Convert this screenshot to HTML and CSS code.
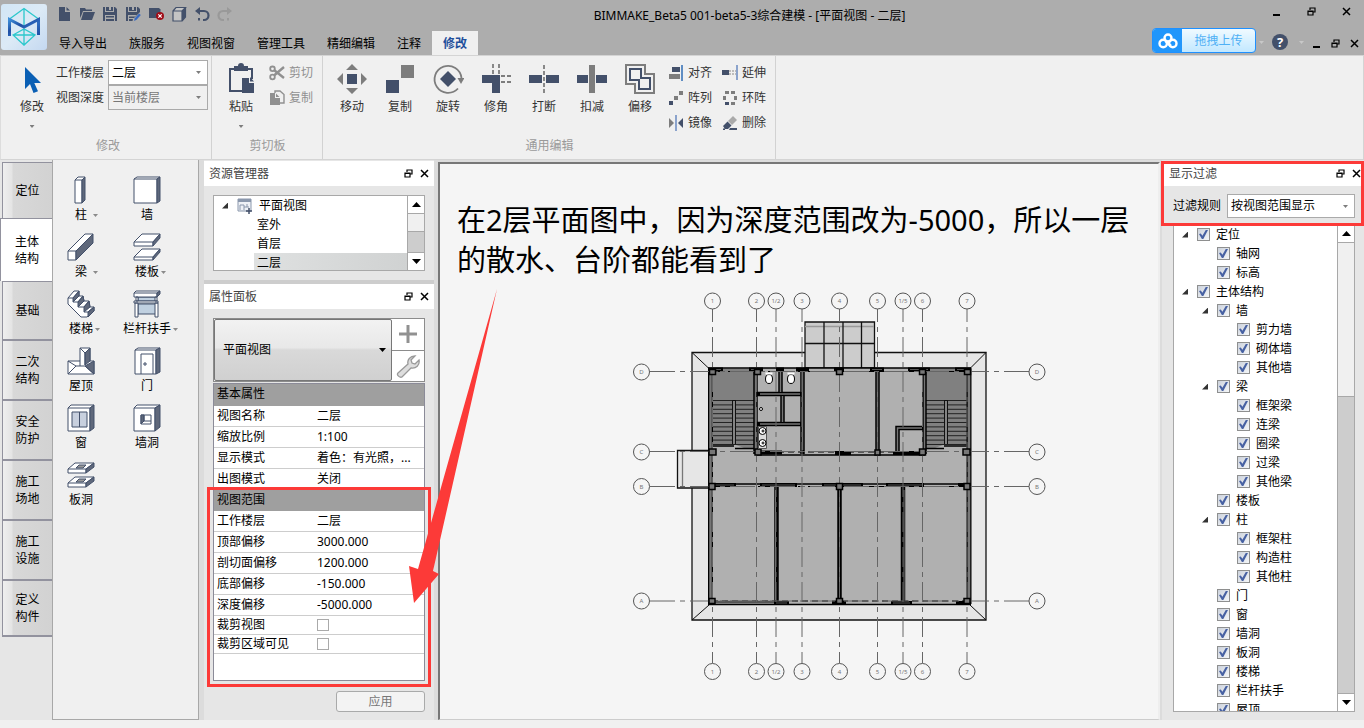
FILE: index.html
```html
<!DOCTYPE html>
<html lang="zh-CN">
<head>
<meta charset="utf-8">
<title>BIMMAKE_Beta5</title>
<link rel="stylesheet" href="styles.css">
</head>
<body>
<svg class="defs" aria-hidden="true">
  <symbol id="i-restore" viewBox="0 0 9 9"><path d="M3 3V1h5v4H6M2.500 1h6M1 4h5v4H1zM.5 4.500h6" fill="none" stroke="currentColor" stroke-width="1.200"/></symbol>
  <symbol id="i-close" viewBox="0 0 9 9"><path d="M1 1l7 7M8 1L1 8" fill="none" stroke="currentColor" stroke-width="1.500"/></symbol>
  <symbol id="i-min" viewBox="0 0 9 9"><path d="M1 7h7v2H1z" fill="currentColor"/></symbol>
  <symbol id="i-up" viewBox="0 0 9 5"><path d="M0 5L4.500 0 9 5z" fill="currentColor"/></symbol>
  <symbol id="i-down" viewBox="0 0 9 5"><path d="M0 0h9L4.500 5z" fill="currentColor"/></symbol>
</svg>

<header class="top">
  <svg class="logo" viewBox="0 0 46 46" aria-label="BIMMAKE">
    <defs><linearGradient id="lg" x1="0" y1="0" x2="1" y2="1"><stop offset="0" stop-color="#d2e6f6"/><stop offset=".5" stop-color="#dceaf6"/><stop offset="1" stop-color="#c4d8f0"/></linearGradient>
    <linearGradient id="lm" x1="0" y1="0" x2="1" y2="1"><stop offset="0" stop-color="#3f8fd8"/><stop offset=".35" stop-color="#1f4fa4"/><stop offset=".6" stop-color="#2f6cc0"/><stop offset="1" stop-color="#1d4ea2"/></linearGradient></defs>
    <rect width="46" height="46" rx="3" fill="url(#lg)"/>
    <path d="M8.500 15L23 4.500 37.500 15M23 4.500V22M12 31l11-6 11 6-11 10zM23 25v16M12 31h22" fill="none" stroke="#2cc8cc" stroke-width="1.300"/>
    <path d="M8.500 32V15.500L23 23l14.500-7.500V31" fill="none" stroke="url(#lm)" stroke-width="3"/>
  </svg>
  <div class="top-rows">
    <div class="title-row">
      <div class="quick">
        <button aria-label="新建"><svg viewBox="0 0 16 16"><path d="M3 1h6v5h5v9H3zM10.500 1L14 4.500h-3.500z" fill="#43506a"/></svg></button>
        <button aria-label="打开"><svg viewBox="0 0 16 16"><path d="M1 2h5l1 1.500h6V5H4L2.500 9 1 12zM4.500 6H16l-3 8H2z" fill="#43506a"/></svg></button>
        <button aria-label="保存"><svg viewBox="0 0 16 16"><path d="M1 1h2v5h9V1h1l2 2v12h-2V9H3v6H1zM4 1h3v3h2V1h2v4H4zM4 10h8v1.500H4zM4 13h8v2H4z" fill="#43506a"/></svg></button>
        <button aria-label="另存为"><svg viewBox="0 0 16 16"><path d="M1 1h2v5h9V1h1l2 2v3L9 12H4v-1.500h6L11.500 9H3v6H1zM4 1h3v3h2V1h2v4H4zM4 13h4l-.5 2H4z" fill="#43506a"/><path d="M9 15l.8-2.800L14 7.500l1.800 1.600-4.200 4.700z" fill="#3769c0"/></svg></button>
        <button aria-label="关闭文件"><svg viewBox="0 0 16 16"><path d="M1 2h10l1.500 1.500V12H1z" fill="#43506a"/><circle cx="12" cy="10" r="4" fill="#a00d18"/><path d="M10.300 8.300l3.400 3.400m0-3.400l-3.400 3.400" stroke="#fff" stroke-width="1.200"/></svg></button>
        <button aria-label="三维视图"><svg viewBox="0 0 16 16"><path d="M2 5h9v10H2zM2 5l3-3.500h9.500L11 5M14.500 1.500V11L11 15" fill="#c4c4c4" stroke="#43506a" stroke-width="1.200"/><path d="M11 5l3.500-3.500V11L11 15z" fill="#43506a"/></svg></button>
        <button aria-label="撤销"><svg viewBox="0 0 16 16"><path d="M5 5h5a4 4 0 010 9H9" fill="none" stroke="#43506a" stroke-width="2.200"/><path d="M1 5l5-4v8z" fill="#43506a"/><path d="M4 12h2v2.500H4z" fill="#43506a"/></svg></button>
        <button aria-label="重做"><svg viewBox="0 0 16 16"><path d="M11 5H6a4 4 0 000 9h1" fill="none" stroke="#999" stroke-width="2.200"/><path d="M15 5l-5-4v8z" fill="#999"/><path d="M10 12h2v2.500h-2z" fill="#999"/></svg></button>
      </div>
      <h1 class="title">BIMMAKE_Beta5 001-beta5-3综合建模 - [平面视图 - 二层]</h1>
      <div class="win">
        <button aria-label="最小化"><svg><use href="#i-min"/></svg></button>
        <button aria-label="还原"><svg><use href="#i-restore"/></svg></button>
        <button aria-label="关闭"><svg><use href="#i-close"/></svg></button>
      </div>
    </div>
    <div class="tab-row">
      <nav class="tabs">
        <button>导入导出</button><button>族服务</button><button>视图视窗</button><button>管理工具</button><button>精细编辑</button><button>注释</button><button class="on">修改</button>
      </nav>
      <button class="upload"><span class="cloud"><svg viewBox="0 0 20 16"><g fill="none" stroke="#fff" stroke-width="2.400"><circle cx="5.200" cy="10.500" r="3.700"/><circle cx="14.800" cy="10.500" r="3.700"/><circle cx="10" cy="5" r="3.500"/><path d="M7.500 8l5.500 5"/></g></svg></span><span class="uptext">拖拽上传</span></button>
      <i class="caret pale"></i>
      <button class="help" aria-label="帮助">?</button>
      <i class="caret pale"></i>
      <div class="win small">
        <button aria-label="最小化视图"><svg><use href="#i-min"/></svg></button>
        <button aria-label="还原视图"><svg><use href="#i-restore"/></svg></button>
        <button aria-label="关闭视图"><svg><use href="#i-close"/></svg></button>
      </div>
    </div>
  </div>
</header>

<section class="ribbon">
  <div class="group g-mod">
    <div class="tools">
      <button class="big"><svg viewBox="0 0 32 32"><path d="M9 4v22l5-5 3.500 9 4.500-1.800L18.300 20H25z" fill="#0a5fb4"/></svg>修改<i class="caret"></i></button>
      <div class="fields">
        <label for="level">工作楼层</label><span class="sel"><select id="level"><option>二层</option></select></span>
        <label for="depth">视图深度</label><span class="sel off"><select id="depth" disabled><option>当前楼层</option></select></span>
      </div>
    </div>
    <div class="cap">修改</div>
  </div>
  <div class="group g-clip">
    <div class="tools">
      <button class="big"><svg viewBox="0 0 32 32"><path d="M5 6h22v10" fill="none" stroke="#43506a" stroke-width="2"/><path d="M5 5v23h12" fill="none" stroke="#43506a" stroke-width="2"/><path d="M9 3h4a3 3 0 016 0h4v5H9z" fill="#43506a"/><path d="M17 15h7v5h5v10H17zM25 14l4 4.500h-4z" fill="#43506a"/></svg>粘贴<i class="caret"></i></button>
      <div class="smalls gray">
        <button><svg viewBox="0 0 16 16"><path d="M15 2L5 10.500M15 13L5 5" stroke="#909090" stroke-width="2.400"/><circle cx="3.500" cy="3.800" r="2.300" fill="none" stroke="#909090" stroke-width="1.800"/><circle cx="3.500" cy="12" r="2.300" fill="none" stroke="#909090" stroke-width="1.800"/></svg>剪切</button>
        <button><svg viewBox="0 0 16 16"><path d="M6 3V1h5l4 3.500V13h-4" fill="none" stroke="#909090" stroke-width="1.400"/><path d="M1 3h5v5h5v7H1zM7 3.500L10.500 7H7z" fill="#909090"/></svg>复制</button>
      </div>
    </div>
    <div class="cap">剪切板</div>
  </div>
  <div class="group g-edit">
    <div class="tools">
      <button class="big"><svg viewBox="0 0 32 32"><path d="M11 11h10v10H11z" fill="#43506a"/><path d="M10 7h12l-6-6zM10 25h12l-6 6zM7 10v12l-6-6zM25 10v12l6-6z" fill="#7d7d7d"/></svg>移动</button>
      <button class="big"><svg viewBox="0 0 32 32"><path d="M17 2h13v13H17z" fill="#7d7d7d"/><path d="M2 17h13v13H2z" fill="#43506a"/></svg>复制</button>
      <button class="big"><svg viewBox="0 0 32 32"><path d="M26 25.500A13.500 13.500 0 1 1 29.500 15" fill="none" stroke="#7d7d7d" stroke-width="1.800"/><path d="M25.500 15h7L29 21z" fill="#7d7d7d"/><path d="M16 8l8 8-8 8-8-8z" fill="#43506a"/></svg>旋转</button>
      <button class="big"><svg viewBox="0 0 32 32"><path d="M2 12h18v18h-8V20H2z" fill="#43506a"/><path d="M13 1v10M19 1v10M21 13h11M21 19h11" stroke="#7d7d7d" stroke-width="1.800" stroke-dasharray="4 2"/></svg>修角</button>
      <button class="big"><svg viewBox="0 0 32 32"><path d="M1 12h13v8H1zM18 12h13v8H18z" fill="#43506a"/><path d="M16 2v29" stroke="#7d7d7d" stroke-width="1.800" stroke-dasharray="4 2"/></svg>打断</button>
      <button class="big"><svg viewBox="0 0 32 32"><path d="M1 12h11v8H1zM20 12h11v8H20z" fill="#43506a"/><path d="M13 2h6v28h-6z" fill="#7d7d7d"/></svg>扣减</button>
      <button class="big"><svg viewBox="0 0 32 32"><path d="M2 2h19v9h9v19H11v-9H2z" fill="none" stroke="#7d7d7d" stroke-width="2"/><path d="M6 6h11v9h9v11H15v-9H6z" fill="none" stroke="#43506a" stroke-width="2"/></svg>偏移</button>
      <div class="smalls two">
        <button><svg viewBox="0 0 16 16"><path d="M4 2h8v5H4z" fill="#43506a"/><path d="M1 9h11v5H1z" fill="#7d7d7d"/><path d="M14 0v16" stroke="#2f6cb5" stroke-width="1.500"/></svg>对齐</button>
        <button><svg viewBox="0 0 16 16"><path d="M0 5h7v5H0z" fill="#43506a"/><path d="M7 6h7M7 9h7" stroke="#888" stroke-dasharray="2 1"/><path d="M15 0v15" stroke="#8ba3cc" stroke-width="2"/></svg>延伸</button>
        <button><svg viewBox="0 0 16 16"><path d="M1 11h4v4H1z" fill="#43506a"/><path d="M6 6h4v4H6zM11 1h4v4h-4z" fill="#7d7d7d"/></svg>阵列</button>
        <button><svg viewBox="0 0 16 16"><path d="M3 1h4v3H3zM9 1h4v3H9zM1 6h3v4H1zM12 6h3v4h-3zM9 12h4v3H9z" fill="#7d7d7d"/><path d="M3 12h4v3H3z" fill="#43506a"/></svg>环阵</button>
        <button><svg viewBox="0 0 16 16"><path d="M1 3l5 5-5 5z" fill="#7d7d7d"/><path d="M15 3l-5 5 5 5z" fill="#43506a"/><path d="M8 0v16" stroke="#8ba3cc" stroke-width="2"/></svg>镜像</button>
        <button><svg viewBox="0 0 16 16"><path d="M6 6l5-5 4 4-5 5z" fill="#aaa"/><path d="M5.500 6.500l4 4L6 14H3l-2-3zM8 13h7v2H7zM1 13.500h2V15H1z" fill="#43506a"/></svg>删除</button>
      </div>
    </div>
    <div class="cap">通用编辑</div>
  </div>
</section>

<main class="work">
  <nav class="cats">
    <button>定位</button><button class="on">主体<br>结构</button><button>基础</button><button>二次<br>结构</button><button>安全<br>防护</button><button>施工<br>场地</button><button>施工<br>设施</button><button>定义<br>构件</button>
  </nav>

  <section class="palette">
    <button><svg viewBox="0 0 28 28"><path d="M8 4h7v23H8zM8 4l3-3h7l-3 3" fill="#fff"/><path class="d" d="M15 4l3-3v23l-3 3z"/></svg><span class="more">柱</span></button>
    <button><svg viewBox="0 0 28 28"><path d="M1 3h23v24H1zM1 3l3-2h23l-3 2" fill="#fff"/><path class="d" d="M24 3l3-2v24l-3 2z"/></svg><span>墙</span></button>
    <button><svg viewBox="0 0 28 28"><path d="M1 18h8v9H1zM1 18L18 1h8L9 18" fill="#fff"/><path class="d" d="M9 18L26 1v9L9 27z"/></svg><span class="more">梁</span></button>
    <button><svg viewBox="0 0 28 28"><path d="M1 9h19v4H1zM1 9l8-8h18l-7 8M1 24h19v3H1zM1 24l8-8h18l-7 8" fill="#fff"/><path class="d" d="M20 9l7-8v4l-7 8zM20 24l7-8v3l-7 8z"/></svg><span class="more">楼板</span></button>
    <button><svg viewBox="0 0 28 28"><path d="M1 8v6l13 13h6l7-6v-4h-4l-1-6h-5l-1-5h-4V1H7L1 8z" fill="#fff"/><path class="d" d="M12 1v5L6 12V8zM16 6l1 5-6 6v-5zM22 11l1 6-6 5v-5zM27 17v4l-6 6v-5z"/><path d="M1 8h5l6-7M6 12h5l5-6M11 17h6l5-6M17 22h4l6-5" fill="none"/></svg><span class="more">楼梯</span></button>
    <button><svg viewBox="0 0 28 28"><path d="M5 7h18v4H5zM5 14h18v10H5z" fill="#c0d0e0"/><path d="M1 3h23v4H1zM1 3l2-2h24l-3 2M1 11h24v2H1zM2 13h3v14H2zM22 13h3v14h-3zM3 7h2v4H3zM22 7h2v4h-2z" fill="#fff"/><path class="d" d="M24 3l3-2v3l-3 3z"/></svg><span class="more">栏杆扶手</span></button>
    <button><svg viewBox="0 0 28 28"><path d="M1 14h12v-13h10v13h4v13H1z" fill="#fff"/><path class="d" d="M23 1v13l-5 4V6zM27 14v13l-9-8z"/><path d="M13 1l5 5v12M13 14v5M1 14l8 5h9l9 8M9 19l-8 8" fill="none"/></svg><span>屋顶</span></button>
    <button><svg viewBox="0 0 28 28"><path d="M2 3h21v24H2zM2 3l3-2h22l-4 2M8 27V7h12v20" fill="#fff"/><path d="M11 16h2v2h-2z" fill="#fff"/><path class="d" d="M23 3l4-2v24l-4 2z"/></svg><span>门</span></button>
    <button><svg viewBox="0 0 28 28"><path d="M1 4h22v23H1zM1 4l3-3h23l-4 3" fill="#fff"/><path d="M5 8h15v15H5zM12.500 8v15" fill="#c8d0de"/><path class="d" d="M23 4l4-3v23l-4 3z"/></svg><span>窗</span></button>
    <button><svg viewBox="0 0 28 28"><path d="M1 4h21v23H1zM1 4l3-3h23l-5 3M8 11h10v9H8z" fill="#fff"/><path class="d" d="M22 4l5-3v22l-5 4zM8 11h3v6l-3 3z"/><path d="M11 11v6h7" fill="none"/></svg><span>墙洞</span></button>
    <button><svg viewBox="0 0 28 28"><path d="M1 8h18v4H1zM1 8l7-6h19l-8 6M1 22h18v4H1zM1 22l7-6h19l-8 6" fill="#fff"/><path class="d" d="M19 8l8-6v4l-8 6zM19 22l8-6v4l-8 6z"/><path d="M9 7l3-3h7l-3 3zM9 21l3-3h7l-3 3z" fill="#999"/></svg><span>板洞</span></button>
  </section>

  <aside class="dock left">
    <section class="panel">
      <h2>资源管理器<button aria-label="浮动"><svg><use href="#i-restore"/></svg></button><button aria-label="关闭"><svg><use href="#i-close"/></svg></button></h2>
      <div class="box res">
        <ul>
          <li class="root"><i class="tw"></i><svg viewBox="0 0 16 16"><path d="M1 1h13v12H1z" fill="#eef1f6" stroke="#8a97ac"/><path d="M1 1h13v3H1z" fill="#8a97ac"/><path d="M3 12V7h4v5M7 9h5M10 6v3" fill="none" stroke="#8a97ac"/><path d="M12 10v6M9 13h6" stroke="#43506a" stroke-width="1.500"/></svg>平面视图</li>
          <li><span>室外</span></li><li><span>首层</span></li><li><span class="cur">二层</span></li>
        </ul>
        <div class="sb short"><button aria-label="向上滚动"><svg><use href="#i-up"/></svg></button><div class="track"><div class="thumb"></div></div><button aria-label="向下滚动"><svg><use href="#i-down"/></svg></button></div>
      </div>
    </section>
    <section class="panel props">
      <h2>属性面板<button aria-label="浮动"><svg><use href="#i-restore"/></svg></button><button aria-label="关闭"><svg><use href="#i-close"/></svg></button></h2>
      <div class="type">
        <button class="kind">平面视图<svg><use href="#i-down"/></svg></button>
        <div class="side">
          <button aria-label="新增"><svg viewBox="0 0 24 24"><path d="M12 3v18M3 12h18" stroke="#919191" stroke-width="3"/></svg></button>
          <button aria-label="设置"><svg viewBox="0 0 24 24"><path d="M2 19l10-9c-1-4 2-8 7-8l-4 4 1 3 3 1 4-4c1 5-3 9-8 8L6 23c-2 1-6-2-4-4z" fill="#ddd" stroke="#999" stroke-width="1.300"/></svg></button>
        </div>
      </div>
      <div class="grid">
        <table>
          <colgroup><col class="name"><col></colgroup>
          <tbody>
            <tr class="sec"><th colspan="2">基本属性</th></tr>
            <tr><th>视图名称</th><td>二层</td></tr>
            <tr><th>缩放比例</th><td>1:100</td></tr>
            <tr><th>显示模式</th><td>着色<span class="mid">：</span>有光照<span class="mid">，</span>...</td></tr>
            <tr><th>出图模式</th><td>关闭</td></tr>
          </tbody>
          <tbody>
            <tr class="sec"><th colspan="2">视图范围</th></tr>
            <tr><th>工作楼层</th><td>二层</td></tr>
            <tr><th>顶部偏移</th><td>3000.000</td></tr>
            <tr><th>剖切面偏移</th><td>1200.000</td></tr>
            <tr><th>底部偏移</th><td>-150.000</td></tr>
            <tr><th>深度偏移</th><td>-5000.000</td></tr>
            <tr class="low"><th><label for="crop">裁剪视图</label></th><td><input type="checkbox" id="crop"></td></tr>
            <tr class="low"><th><label for="cropv">裁剪区域可见</label></th><td><input type="checkbox" id="cropv"></td></tr>
          </tbody>
        </table>
        <div class="mark range"></div>
      </div>
      <button class="apply" disabled>应用</button>
    </section>
  </aside>

  <section class="canvas">
    <p class="note">在2层平面图中<span class="mid">，</span>因为深度范围改为-5000<span class="mid">，</span>所以一层<br>的散水、台阶都能看到了</p>
    <svg class="plan" viewBox="630 290 420 392">
      <g stroke="#111" stroke-width="1.300">
        <path d="M692 352.500h294V620H692z" fill="#e6e6e6"/>
        <path d="M692 352.500l17 16M986 352.500l-16 16M692 620l17-15M986 620l-16-15" stroke-width="1"/>
        <path d="M677.500 450.500H710v37.500h-32.500z" fill="#e6e6e6"/>
        <path d="M682.500 451v36" stroke="#777"/>
        <path d="M805 322h69.500v46H805z" fill="#ccc"/>
        <path d="M805 326.500h69" stroke="#999"/>
        <path d="M824 322v46M843 322v46M861.500 322v46M805 343.500h69.500" />
      </g>
      <path d="M708 368h263v236H708z" fill="#b0b0b0"/>
      <path d="M713 369h41v79h-10l-8-3h-23zM926 369h41v76h-24l-8 3h-9z" fill="#808080"/>
      <path d="M713 400.500h41m-41 4.400h41m-41 4.400h41m-41 4.400h41m-41 4.400h41m-41 4.400h41m-41 4.400h41m-41 4.400h41m-41 4.400h41m-41 4.400h41m-41 4.400h41M926 400.500h41m-41 4.400h41m-41 4.400h41m-41 4.400h41m-41 4.400h41m-41 4.400h41m-41 4.400h41m-41 4.400h41m-41 4.400h41m-41 4.400h41m-41 4.400h41" stroke="#222"/>
      <path d="M713 446h21M735 448.500h19M926 448.500h18M944 446h23" stroke="#000" stroke-width="1.500"/>
      <path d="M734 400v44M946 400v44" stroke="#111" stroke-width="4"/><path d="M734 401v43M946 401v43" stroke="#aaa" stroke-width="1.500"/>
      <g fill="none" stroke="#000">
        <path d="M710.500 368v236M969 368v236" stroke-width="5"/><path d="M710.500 370v233M969 370v233" stroke="#777" stroke-width="2.500"/>
        <path d="M708 368h263M708 484h263M756 455h169" stroke-width="1.400"/>
        <path d="M708 371.500h263M758 452h166M708 486.500h263M712 601h255" stroke-width="1" stroke-dasharray="6 4"/>
        <path d="M708 604.500h263" stroke-width="1.500"/><path d="M713 602h62" stroke="#555" stroke-width="2.500"/>
        <path d="M755.500 368v86M780.500 368v26M782.500 394v30M802.500 368v86M877.500 368v84M924.500 368v86M757 394h45M757 424h45M897.500 452v-24H924" stroke-width="4.500"/>
        <path d="M755.500 372v78M780.500 372v20M782.500 396v26M802.500 372v78M877.500 372v78M924.500 372v78M760 394h40M760 424h40M897.500 451v-23H922" stroke="#777" stroke-width="1.500"/>
        <path d="M776.500 484v118M839.500 484v118M903 484v118" stroke-width="4.500"/><path d="M775.500 490v110M839.500 490v110M904 490v110" stroke="#777"/>
        <path d="M708 369.500h15M749 369.500h14M776 369.500h8M796 369.500h13M834 369.500h10M870 369.500h14M908 369.500h22M955 369.500h16M708 485h28M760 485h37M822 485h41M886 485h38M958 485h13M774 603h15M832 603h14M891 603h21M956 603h15M758 452.500h24M835 453h16M893 453h28" stroke-width="4"/>
        <path d="M710 369.500h11M751 369.500h10M872 369.500h10M910 369.500h18M957 369.500h12M712 485h22M762 485h33M824 485h37M888 485h34M776 603h11M893 603h17" stroke="#555"/>
      </g>
      <g class="axes">
        <path d="M712.500 309v354M756.500 309v354M776 309v354M802 309v354M839.500 309v354M877.500 309v354M903 309v354M922.500 309v354M967 309v354" stroke-dasharray="20 5 5 5" stroke-dashoffset="7"/>
        <path d="M650 371.500h190M650 451.500h190M650 486.500h190M650 601h190M1029 371.500H840M1029 451.500H840M1029 486.500H840M1029 601H840" stroke-dasharray="25 5 5 5"/>
      </g>
      <g fill="#777" stroke="#000" stroke-width="1.500">
        <path d="M709.500 369.500h6v5h-6zM754.500 369.500h6v5h-6zM836.500 369.500h6v5h-6zM919.500 369.500h6v5h-6zM964.500 369.500h6v5h-6zM709 449h7v6h-7zM755 449h6v6h-6zM875 450h5v5h-5zM919.500 449h6v6h-6zM963 449h7v6h-7zM709 483.500h6v6h-6zM836.500 483.500h6v6h-6zM964 483.500h6v6h-6zM709 598.500h6v5h-6zM836.500 598.500h6v5h-6zM964 598.500h6v5h-6z"/>
      </g>
      <g fill="#fff" stroke="#000">
        <path d="M758.500 426.500h8v22h-8z" fill="#ddd" stroke="#555"/><circle cx="762.500" cy="431" r="3.500"/><circle cx="762.500" cy="443" r="3.500"/><circle cx="763" cy="431" r="1"/><circle cx="763" cy="443" r="1"/>
        <ellipse cx="769" cy="379" rx="3.500" ry="4.500"/><ellipse cx="791" cy="379" rx="3.500" ry="4.500"/><path d="M765.500 372.500h7v2h-7zM787.500 372.500h7v2h-7z" stroke="none"/><circle cx="761" cy="409" r="1.500"/>
      </g>
      <g class="bub">
        <circle cx="712.500" cy="301" r="8"/><circle cx="756.500" cy="301" r="8"/><circle cx="776" cy="301" r="8"/><circle cx="802" cy="301" r="8"/><circle cx="839.500" cy="301" r="8"/><circle cx="877.500" cy="301" r="8"/><circle cx="903" cy="301" r="8"/><circle cx="922.500" cy="301" r="8"/><circle cx="967" cy="301" r="8"/>
        <circle cx="712.500" cy="671.500" r="8"/><circle cx="756.500" cy="671.500" r="8"/><circle cx="776" cy="671.500" r="8"/><circle cx="802" cy="671.500" r="8"/><circle cx="839.500" cy="671.500" r="8"/><circle cx="877.500" cy="671.500" r="8"/><circle cx="903" cy="671.500" r="8"/><circle cx="922.500" cy="671.500" r="8"/><circle cx="967" cy="671.500" r="8"/>
        <circle cx="641.500" cy="372" r="8"/><circle cx="641.500" cy="452" r="8"/><circle cx="641.500" cy="486.500" r="8"/><circle cx="641.500" cy="601" r="8"/>
        <circle cx="1037" cy="372" r="8"/><circle cx="1037" cy="452" r="8"/><circle cx="1037" cy="486.500" r="8"/><circle cx="1037" cy="601" r="8"/>
      </g>
      <g class="num">
        <text x="712.500" y="303">1</text><text x="756.500" y="303">2</text><text x="776" y="303">1/2</text><text x="802" y="303">3</text><text x="839.500" y="303">4</text><text x="877.500" y="303">5</text><text x="903" y="303">1/5</text><text x="922.500" y="303">6</text><text x="967" y="303">7</text>
        <text x="712.500" y="674">1</text><text x="756.500" y="674">2</text><text x="776" y="674">1/2</text><text x="802" y="674">3</text><text x="839.500" y="674">4</text><text x="877.500" y="674">5</text><text x="903" y="674">1/5</text><text x="922.500" y="674">6</text><text x="967" y="674">7</text>
        <text x="641.500" y="374">D</text><text x="641.500" y="454">C</text><text x="641.500" y="489">B</text><text x="641.500" y="603">A</text>
        <text x="1037" y="374">D</text><text x="1037" y="454">C</text><text x="1037" y="489">B</text><text x="1037" y="603">A</text>
      </g>
    </svg>
    <svg class="arrow" viewBox="0 0 90 316"><path d="M89 0L25 282l6 3-25 29-5-37 9 3z" fill="#fc3a38"/></svg>
  </section>

  <aside class="dock right">
    <section class="panel">
      <div class="filter">
        <h2>显示过滤<button aria-label="浮动"><svg><use href="#i-restore"/></svg></button><button aria-label="关闭"><svg><use href="#i-close"/></svg></button></h2>
        <div class="rule"><label for="rule">过滤规则</label><span class="sel"><select id="rule"><option>按视图范围显示</option></select></span></div>
        <div class="mark all"></div>
      </div>
      <div class="box vis">
        <ul>
          <li><i class="tw"></i><label><input type="checkbox" checked>定位</label></li>
          <li class="l1"><label><input type="checkbox" checked>轴网</label></li>
          <li class="l1"><label><input type="checkbox" checked>标高</label></li>
          <li><i class="tw"></i><label><input type="checkbox" checked>主体结构</label></li>
          <li class="l1"><i class="tw"></i><label><input type="checkbox" checked>墙</label></li>
          <li class="l2"><label><input type="checkbox" checked>剪力墙</label></li>
          <li class="l2"><label><input type="checkbox" checked>砌体墙</label></li>
          <li class="l2"><label><input type="checkbox" checked>其他墙</label></li>
          <li class="l1"><i class="tw"></i><label><input type="checkbox" checked>梁</label></li>
          <li class="l2"><label><input type="checkbox" checked>框架梁</label></li>
          <li class="l2"><label><input type="checkbox" checked>连梁</label></li>
          <li class="l2"><label><input type="checkbox" checked>圈梁</label></li>
          <li class="l2"><label><input type="checkbox" checked>过梁</label></li>
          <li class="l2"><label><input type="checkbox" checked>其他梁</label></li>
          <li class="l1"><label><input type="checkbox" checked>楼板</label></li>
          <li class="l1"><i class="tw"></i><label><input type="checkbox" checked>柱</label></li>
          <li class="l2"><label><input type="checkbox" checked>框架柱</label></li>
          <li class="l2"><label><input type="checkbox" checked>构造柱</label></li>
          <li class="l2"><label><input type="checkbox" checked>其他柱</label></li>
          <li class="l1"><label><input type="checkbox" checked>门</label></li>
          <li class="l1"><label><input type="checkbox" checked>窗</label></li>
          <li class="l1"><label><input type="checkbox" checked>墙洞</label></li>
          <li class="l1"><label><input type="checkbox" checked>板洞</label></li>
          <li class="l1"><label><input type="checkbox" checked>楼梯</label></li>
          <li class="l1"><label><input type="checkbox" checked>栏杆扶手</label></li>
          <li class="l1"><label><input type="checkbox" checked>屋顶</label></li>
        </ul>
        <div class="sb long"><button aria-label="向上滚动"><svg><use href="#i-up"/></svg></button><div class="track"><div class="thumb"></div></div><button aria-label="向下滚动"><svg><use href="#i-down"/></svg></button></div>
      </div>
    </section>
  </aside>
</main>
</body>
</html>
```

FILE: styles.css
```css
* { box-sizing: border-box; }
body {
  margin: 0;
  height: 100vh;
  display: flex;
  flex-direction: column;
  overflow: hidden;
  background: #f0f0f0;
  color: #000;
  font: 12px/16px "Noto Sans", "Noto Sans CJK SC", sans-serif;
}
button, select, input { font: inherit; color: inherit; margin: 0; }
button { border: 0; padding: 0; background: none; }
h1, h2, p, ul { margin: 0; padding: 0; font-size: 12px; font-weight: 400; list-style: none; }
svg { display: block; flex: none; }
.defs { position: absolute; width: 0; height: 0; }
.caret { display: block; width: 5px; height: 3px; background: #7d7d7d; clip-path: polygon(0 0, 100% 0, 50% 100%); }
.caret.pale { background: #c8c8c8; }
/* centred full-width punctuation */
.mid { font-family: "Noto Sans CJK TC", sans-serif; line-height: 1; }

/* title bar */
.top { display: flex; background: #adadad; }
.logo { width: 46px; height: 46px; margin: 4px 1px; }
.top-rows { flex: 1; }
.title-row { display: flex; height: 31px; }
.quick { display: flex; padding-left: 4px; align-items: center; height: 27px; }
.quick button { width: 23px; display: flex; justify-content: center; }
.quick svg { width: 16px; height: 16px; }
.title { flex: 1; text-align: center; line-height: 31px; padding-left: 4px; }
.win { display: flex; height: 22px; }
.win button { width: 35px; display: flex; align-items: center; justify-content: center; }
.win svg { width: 9px; height: 9px; }
.win.small { height: 24px; }
.win.small button { width: 19px; }
.tab-row { display: flex; height: 24px; align-items: flex-end; }
.tabs { display: flex; flex: 1; }
.tabs button { height: 24px; padding: 2px 11px 0; }
.tabs .on { background: #f0f0f0; color: #1f4f9c; font-weight: 700; }
.upload { display: flex; width: 104px; height: 25px; margin-bottom: 2px; border: 1px solid #1e90ff; border-radius: 4px; overflow: hidden; background: linear-gradient(#f0faff, #c2e8ff); color: #4fb0f5; }
.upload .cloud { width: 29px; align-self: stretch; display: flex; align-items: center; justify-content: center; background: #2196fb; }
.upload .cloud svg { width: 20px; height: 16px; }
.uptext { flex: 1; line-height: 23px; }
.tab-row .caret { margin: 0 3px 11px; }
.help { width: 16px; height: 16px; margin: 0 8px 5px 5px; border-radius: 50%; background: #43506a; color: #fff; font: 700 13px/16px "Noto Sans", sans-serif; }

/* ribbon */
.ribbon { display: flex; border: 1px solid #d4d4d4; border-left-color: #ddd; }
.group { display: flex; flex-direction: column; padding-top: 4px; padding-bottom: 5px; border-right: 1px solid #d2d2d2; }
.tools { display: flex; height: 78px; }
.g-mod { padding-left: 7px; padding-right: 3px; }
.g-clip, .g-edit { padding-left: 5px; padding-right: 9px; }
.cap { text-align: center; color: #9a9a9a; }
.g-clip .cap, .g-edit .cap { padding-left: 5px; }
.big { display: flex; flex-direction: column; align-items: center; width: 48px; padding-top: 3px; color: #333; }
.big svg { width: 32px; height: 32px; margin-bottom: 4px; }
.big .caret { margin-top: 10px; }
.fields { display: grid; grid-template-columns: auto 100px; column-gap: 4px; grid-auto-rows: 25px; align-items: center; align-content: start; color: #333; }
.sel { position: relative; display: block; height: 25px; }
.sel select { appearance: none; width: 100%; height: 100%; padding: 0 3px; border: 1px solid #aaa; border-radius: 0; background: #fff; color: #000; }
.sel.off select { background: #f0f0f0; color: #777; opacity: 1; }
.sel::after { content: ""; position: absolute; right: 7px; top: 11px; width: 5px; height: 3px; background: #7d7d7d; clip-path: polygon(0 0, 100% 0, 50% 100%); }
.smalls { display: grid; grid-auto-rows: 25px; column-gap: 10px; padding-left: 4px; align-content: start; color: #333; }
.smalls.two { grid-template-columns: auto auto; }
.smalls button { display: flex; align-items: center; gap: 4px; }
.smalls svg { width: 16px; height: 16px; }
.smalls.gray { color: #909090; }

/* work area */
.work { flex: 1; min-height: 0; display: flex; margin-bottom: 8px; background: #dcdcdc; }
.cats { width: 52px; padding-top: 2px; background: #e6e6e6; display: flex; flex-direction: column; }
.cats button { height: 60px; margin-left: 2px; border: solid #92929e; border-width: 2px 0 0 1px; background: linear-gradient(90deg, #efefef 0, #e4e4e4 9px, #d8d8d8 10px, #d2d2d2); line-height: 17px; }
.cats button:first-child { height: 56px; border-top-width: 1px; }
.cats button:nth-child(3) { height: 58px; border-top-width: 1px; }
.cats button:last-child { height: 58px; border-bottom-width: 2px; }
.cats .on { height: 63px; margin-left: 0; border-width: 1px 0 0 1px; background: #fff; padding-left: 1px; }
.palette { width: 147px; display: grid; grid-template-columns: 56px 76px; grid-auto-rows: 57px; padding-top: 16px; background: #f0f0f0; border: solid #a8a8a8; border-width: 0 1px 1px 1px; }
.palette button { display: flex; flex-direction: column; align-items: center; white-space: nowrap; }
.palette svg { width: 28px; height: 28px; margin-bottom: 3px; stroke: #43506a; stroke-width: 1; }
.palette .d { fill: #5f687b; }
.palette span { position: relative; min-width: 20px; }
.palette .more::after { content: ""; position: absolute; left: 100%; top: 7px; margin-left: 2px; width: 5px; height: 3px; background: #8a8a8a; clip-path: polygon(0 0, 100% 0, 50% 100%); }

.dock { background: #e6e6e6; display: flex; flex-direction: column; padding-top: 1px; }
.dock.left { width: 230px; margin: 0 4px 0 5px; }
.dock.right { width: 202px; margin-left: 2px; }
.panel { display: flex; flex-direction: column; min-height: 0; }
.panel h2 { display: flex; height: 25px; align-items: center; padding: 0 5px; background: #fff; color: #444; }
.panel h2 button { width: 9px; height: 9px; color: #000; }
.panel h2 button:first-of-type { margin-left: auto; margin-right: 7px; }
.panel h2 svg { width: 9px; height: 9px; }
.box { display: flex; border: 1px solid #a8a8a8; background: #fff; overflow: hidden; }
.box ul { flex: 1; overflow: hidden; }
.box li { display: flex; align-items: center; height: 19px; }
.tw { width: 6px; height: 6px; background: #333; clip-path: polygon(100% 0, 100% 100%, 0 100%); }
.res { height: 76px; margin: 9px; }
.res .tw { margin: 0 9px 0 8px; }
.res .root svg { width: 16px; height: 16px; margin-right: 6px; }
.res li span { flex: 1; margin-left: 40px; padding-left: 3px; line-height: 19px; }
.res .cur { background: linear-gradient(90deg, #dfe1e1, #d0d2d2); }
.sb { width: 17px; display: flex; flex-direction: column; border-left: 1px solid #a8a8a8; }
.sb button { height: 17px; display: flex; align-items: center; justify-content: center; background: #fff; }
.sb svg { width: 9px; height: 5px; }
.track { flex: 1; background: #cdcdcd; border: solid #a8a8a8; border-width: 1px 0; }
.thumb { background: #f0f0f0; border-bottom: 1px solid #a8a8a8; }
.short .thumb { height: 18px; }
.long .thumb { height: 154px; }

.props { flex: 1; border-top: 4px solid #cdcdcd; }
.type { display: flex; margin: 9px 9px 1px; border: 1px solid #8c8c8c; height: 64px; background: #fff; }
.kind { flex: 1; display: flex; align-items: center; justify-content: space-between; padding: 0 5px 0 8px; border: 1px solid #777; border-radius: 2px; background: linear-gradient(#f2f2f2, #e8e8e8 46%, #d9d9d9 50%, #d0d0d0); }
.kind svg { width: 7px; height: 4px; }
.side { width: 32px; display: flex; flex-direction: column; }
.side button { flex: 1; display: flex; align-items: center; justify-content: center; }
.side button + button { border-top: 1px solid #8c8c8c; }
.side svg { width: 24px; height: 24px; }
.grid { position: relative; margin: 0 9px; height: 298px; border: 1px solid #8b8b98; background: #fff; }
.grid table { width: 100%; border-collapse: collapse; table-layout: fixed; }
.grid .name { width: 100px; }
.grid tr { height: 21px; }
.grid tr.low { height: 19px; }
.grid th, .grid td { padding: 0 3px; border-bottom: 1px solid #cdcdcd; text-align: left; font-weight: 400; white-space: nowrap; line-height: 18px; }
.grid .sec th { background: #9f9f9f; border-color: #9f9f9f; }
.grid input { appearance: none; display: block; width: 12px; height: 12px; border: 1px solid #aaa; background: #fff; }
.mark { position: absolute; border: 3px solid #fc3a38; pointer-events: none; }
.mark.range { left: -7px; right: -7px; top: 103px; bottom: -7px; }
.mark.all { left: -1px; right: 0; top: 0; bottom: -2px; z-index: 1; }
.apply { width: 89px; height: 21px; margin: 10px 9px 8px auto; border: 1px solid #a9aaaa; border-radius: 3px; background: #f3f3f3; color: #777; }

/* drawing view */
.canvas { position: relative; flex: 1; margin-top: 2px; background: #f5f5f5; border: 2px solid #777; border-width: 2px 2px 1px; border-right-color: #eee; border-bottom-color: #ccc; }
.note { margin: 36px 0 0 17px; font-size: 29px; line-height: 40px; white-space: nowrap; }
.plan { width: 420px; height: 392px; margin: 10px 0 0 190px; }
.arrow { position: absolute; left: -32px; top: 125px; width: 90px; height: 316px; z-index: 2; }
.axes path { fill: none; stroke: #666; stroke-width: 1; }
.bub circle { fill: #f5f5f5; stroke: #555; stroke-width: 1; }
.num text { font: 6px "Noto Sans", sans-serif; text-anchor: middle; fill: #777; }

/* display filter */
.right .panel { flex: 1; }
.filter { position: relative; padding: 0 2px 0 1px; }
.filter h2 { padding: 0 1px 0 6px; }
.rule { display: flex; align-items: center; gap: 6px; padding: 8px 7px 6px 10px; }
.rule .sel { flex: 1; height: 24px; }
.vis { flex: 1; min-height: 0; margin: 0 9px 8px 11px; }
.vis li { padding-left: 23px; }
.vis .l1 { padding-left: 43px; }
.vis .l2 { padding-left: 63px; }
.vis .tw { flex: none; margin: 0 9px 0 -15px; }
.vis label { display: flex; align-items: center; gap: 6px; }
.vis input { appearance: none; width: 13px; height: 13px; border: 1px solid #8e8f8f; background: linear-gradient(135deg, #ccd2dc, #f4f6f8); }
.vis input:checked::before { content: ""; display: block; width: 9px; height: 9px; margin: 1px; background: #4862a3; clip-path: polygon(0 45%, 20% 40%, 38% 65%, 75% 0, 100% 0, 48% 100%, 32% 100%); }
```
